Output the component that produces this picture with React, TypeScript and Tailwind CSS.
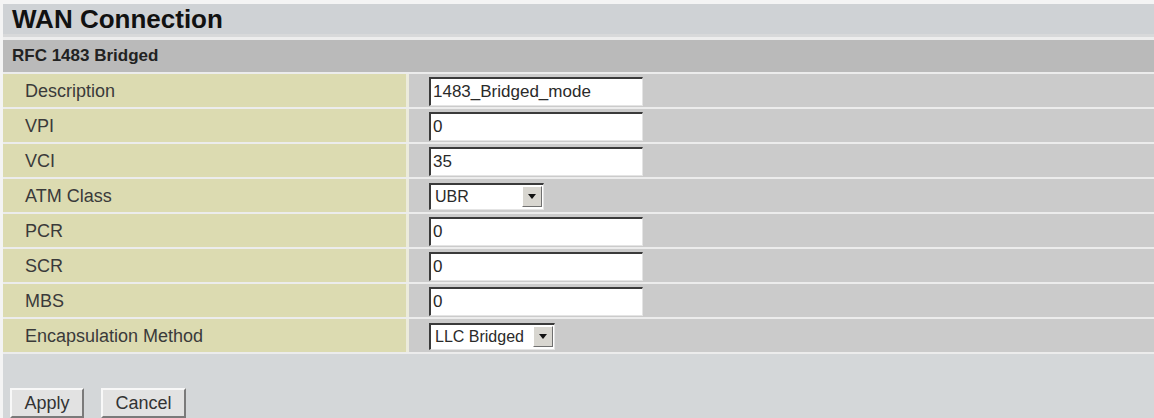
import { ReactNode } from "react";

type Field =
  | { label: string; kind: "text"; value: string }
  | { label: string; kind: "select"; value: string; width: string };

const fields: Field[] = [
  { label: "Description", kind: "text", value: "1483_Bridged_mode" },
  { label: "VPI", kind: "text", value: "0" },
  { label: "VCI", kind: "text", value: "35" },
  { label: "ATM Class", kind: "select", value: "UBR", width: "w-[115px]" },
  { label: "PCR", kind: "text", value: "0" },
  { label: "SCR", kind: "text", value: "0" },
  { label: "MBS", kind: "text", value: "0" },
  { label: "Encapsulation Method", kind: "select", value: "LLC Bridged", width: "w-[126px]" },
];

function TextBox({ value }: { value: string }) {
  return (
    <div className="w-[214px] h-[29px] bg-white border-t-2 border-l-2 border-r border-b border-t-[#3a3a3a] border-l-[#3a3a3a] border-r-[#e4e4e4] border-b-[#e4e4e4] flex items-center pl-[2px] text-[17px] text-[#2a2a2a] leading-none">
      {value}
    </div>
  );
}

function SelectBox({ value, width }: { value: string; width: string }) {
  return (
    <div className={`${width} h-[27px] bg-white border-t-2 border-l-2 border-r border-b border-t-[#3a3a3a] border-l-[#3a3a3a] border-r-[#e4e4e4] border-b-[#e4e4e4] flex items-center`}>
      <span className="flex-1 pl-[4px] text-[16px] text-[#2a2a2a] leading-none">{value}</span>
      <div className="w-[20px] h-[21px] mr-[1px] bg-[#d8d6d0] border border-t-white border-l-white border-r-[#707070] border-b-[#707070] flex items-center justify-center">
        <svg width="8" height="5" viewBox="0 0 8 5">
          <path d="M0 0h8L4 5z" fill="#111" />
        </svg>
      </div>
    </div>
  );
}

function Row({ label, children }: { label: string; children: ReactNode }) {
  return (
    <div className="flex h-[35px] border-t-2 border-[#ececec]">
      <div className="w-[403px] bg-[#dcdbb1] flex items-center pl-[22px] pt-[1px] text-[18px] text-[#3a3a3a]">
        {label}
      </div>
      <div className="w-[3px] bg-[#ecebdc]" />
      <div className="flex-1 bg-[#cbcbcb] flex items-center pl-[20px] pt-[1px]">{children}</div>
    </div>
  );
}

function RaisedButton({ children, width }: { children: ReactNode; width: string }) {
  return (
    <button className={`${width} h-[30px] bg-[#e2e2e2] border-2 border-t-[#f8f8f8] border-l-[#f8f8f8] border-r-[#7a7a7a] border-b-[#7a7a7a] text-[18px] text-[#333] leading-none`}>
      {children}
    </button>
  );
}

export default function App() {
  return (
    <div className="w-[1154px] h-[418px] overflow-hidden bg-[#f4f4f4] pt-[4px] pl-[3px] font-['Liberation_Sans',Arial,sans-serif]">
      {/* Page title */}
      <div className="h-[30px] bg-[#cfd2d5] flex items-center pl-[9px] text-[26px] font-bold text-[#111] leading-none">
        WAN Connection
      </div>
      <div className="h-[3px] bg-[#d8d9da]" />
      <div className="h-[3px] bg-[#ededed]" />

      {/* Section header */}
      <div className="h-[32px] bg-[#bababa] flex items-center pl-[9px] text-[17px] font-bold text-[#222]">
        RFC 1483 Bridged
      </div>

      {fields.map((f) => (
        <Row key={f.label} label={f.label}>
          {f.kind === "text" ? <TextBox value={f.value} /> : <SelectBox value={f.value} width={f.width} />}
        </Row>
      ))}

      {/* Actions */}
      <div className="h-[66px] border-t-2 border-[#ececec] bg-[#d4d7d9] flex items-end gap-[17px] pl-[7px]">
        <RaisedButton width="w-[74px]">Apply</RaisedButton>
        <RaisedButton width="w-[85px]">Cancel</RaisedButton>
      </div>
    </div>
  );
}
